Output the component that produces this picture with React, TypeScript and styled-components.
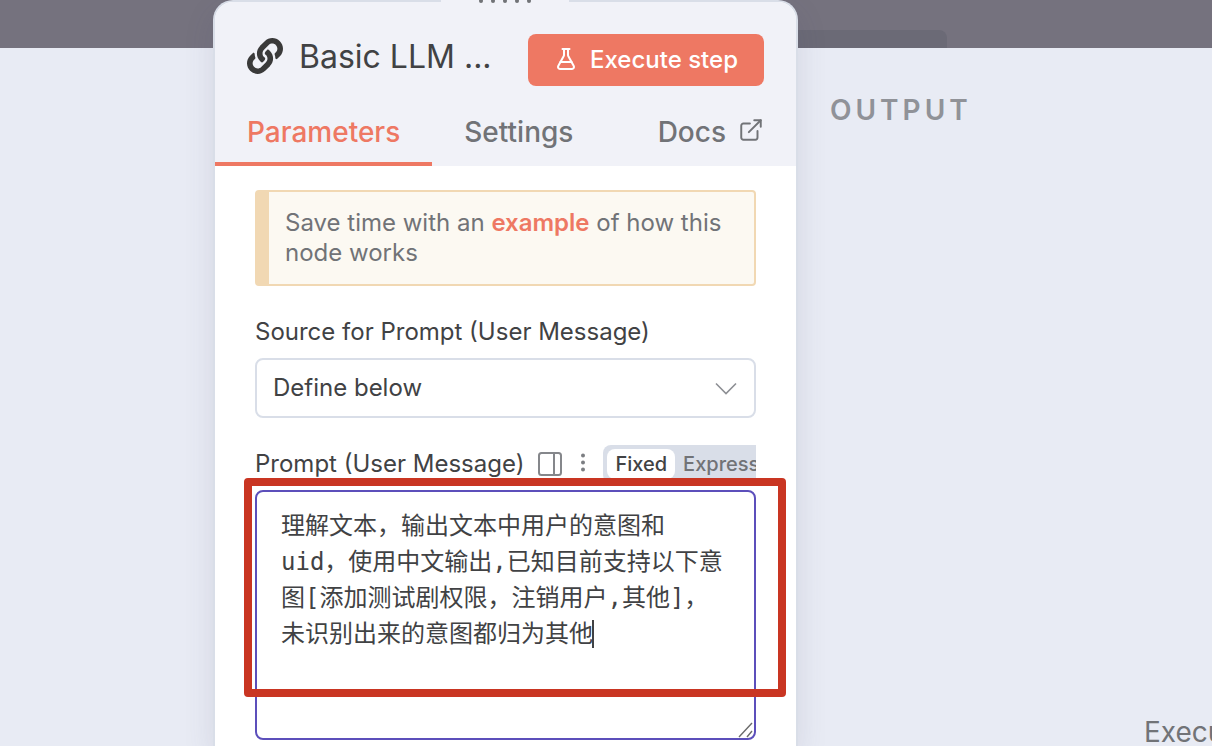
import React, { useState } from "react";
import styled, { createGlobalStyle } from "styled-components";
import { FaLink } from "react-icons/fa";
import { ExternalLink, FlaskConical } from "lucide-react";

const color = {
  primary: "#ee7863",
  text: "#414244",
  muted: "#717377",
  border: "#d9dee8",
  header: "#f1f2f8",
  canvas: "#e8ebf4",
  backdrop: "#75727e",
  focus: "#5c4fbb",
  mark: "#c93522",
};

const GlobalStyle = createGlobalStyle`
  *, *::before, *::after { box-sizing: border-box; }
  body {
    margin: 0;
    background: ${color.canvas};
    color: ${color.text};
    font-family: Inter, "Noto Sans CJK SC", sans-serif;
  }
  button, select, textarea { font: inherit; color: inherit; }
`;

const Page = styled.div`
  display: grid;
  grid-template-columns: minmax(0, 213fr) minmax(0, 585fr) minmax(0, 414fr);
  grid-template-rows: 48px minmax(0, 1fr);
  height: 100vh;
  overflow: hidden;
`;

const Backdrop = styled.div`
  grid-area: 1 / 1 / 2 / -1;
  background: ${color.backdrop};
`;

const BackdropTab = styled.div`
  grid-area: 1 / 3;
  align-self: end;
  width: 36%;
  height: 18px;
  border-radius: 0 8px 0 0;
  background: #6b6a76;
`;

const NodePanel = styled.main`
  grid-area: 1 / 2 / -1 / 3;
  position: relative;
  border: 2px solid ${color.border};
  border-bottom: 0;
  border-radius: 20px 20px 0 0;
  background: #fff;
  box-shadow: 0 12px 30px rgba(68, 72, 110, 0.13);
`;

const DragHandle = styled.div`
  position: absolute;
  top: -2px;
  left: 50%;
  display: flex;
  justify-content: center;
  gap: 8px;
  width: 128px;
  height: 4px;
  margin-left: -65px;
  overflow: hidden;
  background: ${color.header};
`;

const Dot = styled.span`
  width: 4px;
  height: 4px;
  margin-top: -1px;
  border-radius: 2px;
  background: ${color.muted};
`;

const Header = styled.header`
  padding-top: 32px;
  border-radius: 18px 18px 0 0;
  background: ${color.header};
`;

const TitleBar = styled.div`
  display: flex;
  align-items: center;
  padding: 0 32px;
`;

const Title = styled.h1`
  flex: 1;
  min-width: 0;
  margin: 0 16px;
  padding-bottom: 6px;
  overflow: hidden;
  font-size: 32px;
  font-weight: 400;
  line-height: 40px;
  white-space: nowrap;
`;

const NodeIcon = styled(FaLink)`
  flex: none;
  margin-top: -8px;
  width: 36px;
  height: 36px;
  color: #3a3a3a;
`;

const ExecuteButton = styled.button`
  display: flex;
  align-items: center;
  justify-content: center;
  gap: 12px;
  flex: none;
  width: 236px;
  height: 52px;
  padding: 0 0 2px;
  border: 0;
  border-radius: 8px;
  background: ${color.primary};
  color: #fff;
  font-size: 24px;
  font-weight: 500;
`;

const Tabs = styled.nav`
  display: flex;
  margin-top: 12px;
`;

const Tab = styled.a<{ $active?: boolean; $end?: boolean }>`
  display: flex;
  align-items: center;
  gap: 12px;
  height: 68px;
  margin-left: ${(p) => (p.$end ? "auto" : "0")};
  padding: 4px 32px 0;
  border-bottom: 4px solid ${(p) => (p.$active ? color.primary : "transparent")};
  color: ${(p) => (p.$active ? color.primary : color.muted)};
  font-size: 28px;
  font-weight: 500;
  text-decoration: none;

  svg {
    margin-bottom: 4px;
  }
`;

const Form = styled.form`
  padding: 24px 40px 0;
`;

const Callout = styled.p`
  margin: 0;
  padding: 16px;
  border: 2px solid #f1d8b3;
  border-left-width: 14px;
  border-radius: 4px;
  background: #fcf9f2;
  color: ${color.muted};
  font-size: 24px;
  line-height: 30px;
`;

const CalloutLink = styled.a`
  color: ${color.primary};
  font-weight: 600;
  text-decoration: none;
`;

const FieldHead = styled.div`
  display: flex;
  align-items: center;
  height: 38px;
  margin: 27px 0 7px;
  overflow: hidden;
`;

const Label = styled.label`
  flex: none;
  font-size: 24px;
  line-height: 30px;
  white-space: nowrap;
`;

const SelectBox = styled.div`
  position: relative;
`;

const Select = styled.select`
  display: block;
  width: 100%;
  height: 60px;
  padding: 0 16px 2px;
  border: 2px solid ${color.border};
  border-radius: 8px;
  background: #fff;
  appearance: none;
  font-size: 24px;
`;

const Chevron = styled.svg`
  position: absolute;
  top: 24px;
  right: 19px;
  pointer-events: none;
`;

const IconButton = styled.button`
  display: flex;
  flex: none;
  margin-left: 13px;
  padding: 0;
  border: 0;
  background: none;
`;

const Toggle = styled.fieldset`
  display: flex;
  flex: none;
  height: 38px;
  margin: 0 0 0 15px;
  padding: 4px;
  border: 0;
  border-radius: 8px;
  background: ${color.border};
`;

const Option = styled.label<{ $on: boolean }>`
  padding: 0 8px;
  border-radius: 8px;
  background: ${(p) => (p.$on ? "#fff" : "transparent")};
  color: ${(p) => (p.$on ? color.text : color.muted)};
  font-size: 20px;
  font-weight: 500;
  line-height: 30px;
`;

const HiddenRadio = styled.input`
  position: absolute;
  opacity: 0;
  pointer-events: none;
`;

const Editor = styled.div`
  position: relative;
`;

const TextArea = styled.textarea`
  display: block;
  width: 100%;
  height: 250px;
  padding: 16px 24px;
  border: 2px solid ${color.focus};
  border-radius: 8px;
  outline: 0;
  background: #fff;
  resize: none;
  overflow: hidden;
  font-family: "DejaVu Sans Mono", "Noto Sans CJK SC", monospace;
  font-size: 24px;
  line-height: 36px;
`;

const Caret = styled.span`
  position: absolute;
  top: 130px;
  left: 337px;
  width: 2px;
  height: 28px;
  background: ${color.text};
`;

const Grip = styled.svg`
  position: absolute;
  right: 2px;
  bottom: 2px;
`;

const Highlight = styled.div`
  position: absolute;
  inset: -12px -30px 43px -11px;
  border: 8px solid ${color.mark};
  border-radius: 4px;
  pointer-events: none;
`;

const Output = styled.section`
  grid-area: 2 / 3;
  display: flex;
  flex-direction: column;
  padding: 46px 0 0 32px;
  overflow: hidden;
`;

const OutputTitle = styled.h2`
  margin: 0;
  color: #909298;
  font-size: 28px;
  font-weight: 600;
  letter-spacing: 4px;
  line-height: 32px;
`;

const OutputHint = styled.p`
  margin: auto 0 -4px;
  padding-left: 314px;
  color: ${color.muted};
  font-size: 28px;
  line-height: 36px;
  white-space: nowrap;
`;

const PROMPT =
  "理解文本，输出文本中用户的意图和uid，使用中文输出,已知目前支持以下意图[添加测试剧权限，注销用户,其他]，未识别出来的意图都归为其他";

export default function App() {
  const [mode, setMode] = useState("Fixed");
  const [prompt, setPrompt] = useState(PROMPT);

  return (
    <>
      <GlobalStyle />
      <Page>
        <Backdrop />
        <BackdropTab />
        <Output>
          <OutputTitle>OUTPUT</OutputTitle>
          <OutputHint>Execute</OutputHint>
        </Output>
        <NodePanel>
          <Header>
            <TitleBar>
              <NodeIcon />
              <Title>Basic LLM ...</Title>
              <ExecuteButton type="button">
                <FlaskConical size={24} />
                Execute step
              </ExecuteButton>
            </TitleBar>
            <Tabs>
              <Tab href="#parameters" $active>
                Parameters
              </Tab>
              <Tab href="#settings">Settings</Tab>
              <Tab href="#docs" $end>
                Docs
                <ExternalLink size={26} strokeWidth={1.8} />
              </Tab>
            </Tabs>
          </Header>
          <DragHandle>
            {[0, 1, 2, 3, 4].map((i) => (
              <Dot key={i} />
            ))}
          </DragHandle>
          <Form>
            <Callout>
              Save time with an <CalloutLink href="#example">example</CalloutLink> of how this node works
            </Callout>

            <FieldHead>
              <Label htmlFor="source">Source for Prompt (User Message)</Label>
            </FieldHead>
            <SelectBox>
              <Select id="source">
                <option>Define below</option>
              </Select>
              <Chevron width="22" height="14" viewBox="0 0 22 14" fill="none" stroke="#8d8f94" strokeWidth="1.6">
                <path d="M1 1.5 11 11.500 21 1.5" />
              </Chevron>
            </SelectBox>

            <FieldHead>
              <Label htmlFor="prompt">Prompt (User Message)</Label>
              <IconButton type="button" aria-label="Open side panel">
                <svg width="26" height="26" viewBox="0 0 26 26" fill="none" stroke="#85878b" strokeWidth="2">
                  <rect x="2" y="2" width="22" height="22" rx="2.500" />
                  <path d="M17 2v22" />
                </svg>
              </IconButton>
              <IconButton type="button" aria-label="More options">
                <svg width="12" height="24" viewBox="0 0 12 24" fill="#7c7e82">
                  <circle cx="7" cy="3.500" r="2" />
                  <circle cx="7" cy="10.500" r="2" />
                  <circle cx="7" cy="17.500" r="2" />
                </svg>
              </IconButton>
              <Toggle>
                {["Fixed", "Expression"].map((name) => (
                  <Option key={name} $on={mode === name}>
                    <HiddenRadio
                      type="radio"
                      name="mode"
                      checked={mode === name}
                      onChange={() => setMode(name)}
                    />
                    {name}
                  </Option>
                ))}
              </Toggle>
            </FieldHead>
            <Editor>
              <TextArea
                id="prompt"
                spellCheck={false}
                value={prompt}
                onChange={(e) => setPrompt(e.target.value)}
              />
              <Caret />
              <Grip width="16" height="16" viewBox="0 0 16 16" stroke="#6b6b6b" strokeWidth="1.4">
                <path d="M1 15 14 1M9 15 14 9" />
              </Grip>
              <Highlight />
            </Editor>
          </Form>
        </NodePanel>
      </Page>
    </>
  );
}
